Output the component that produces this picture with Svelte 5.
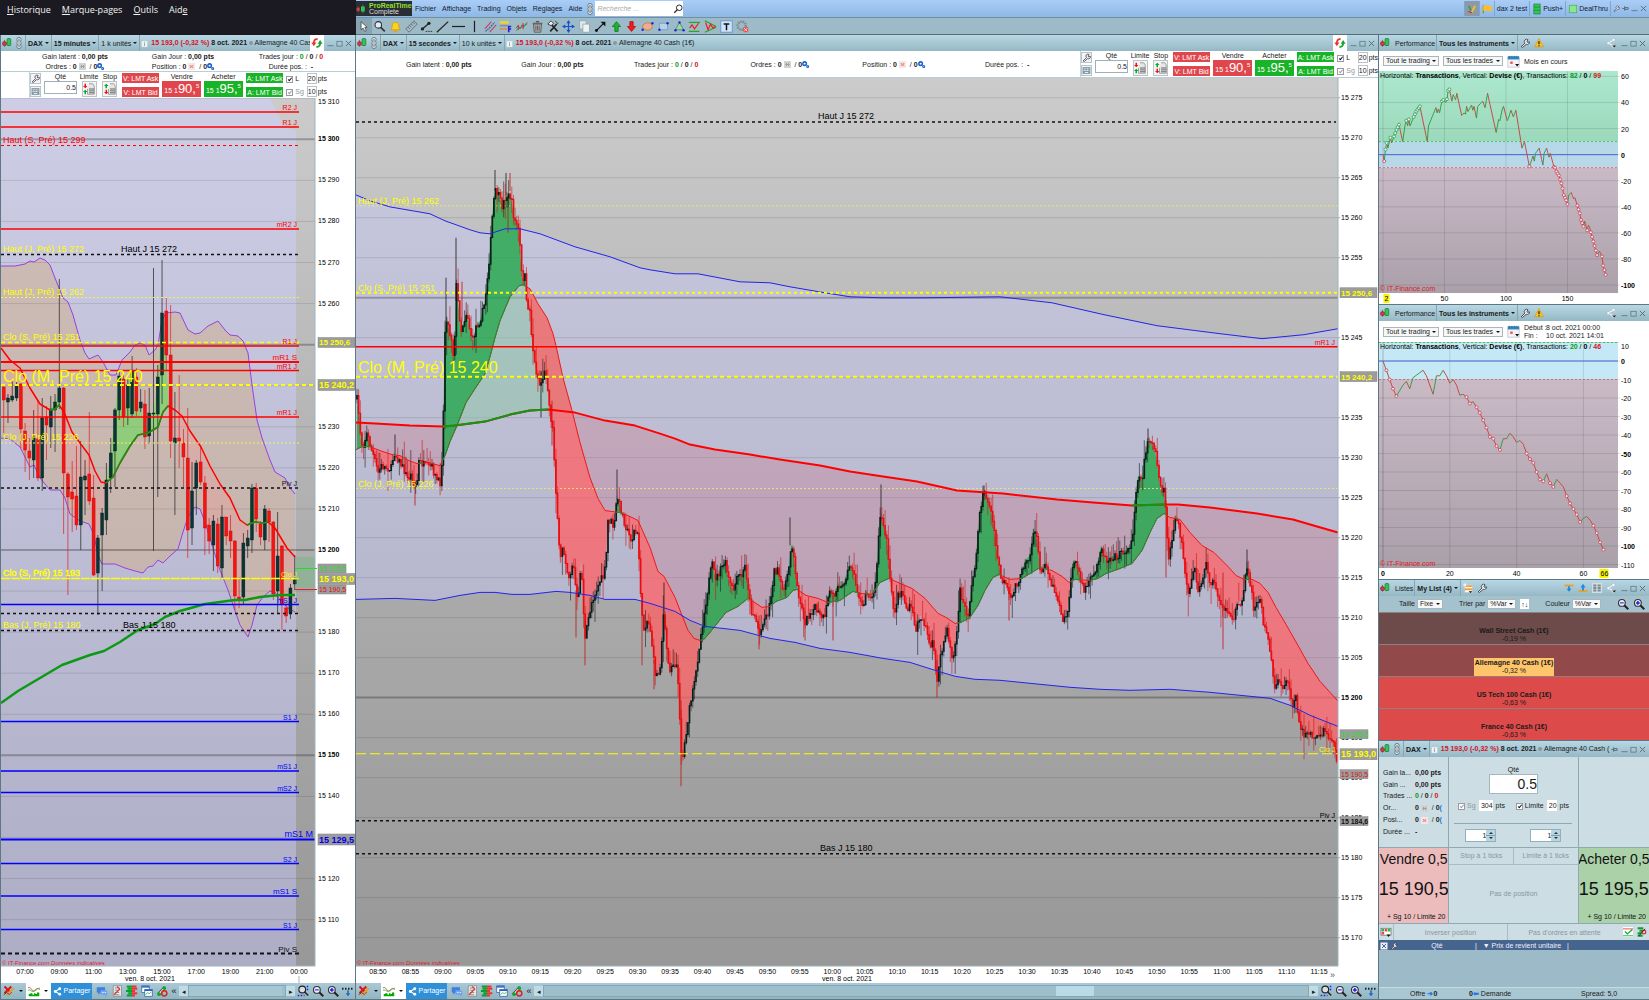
<script lang="ts">
	type Pt = number[];

	let lw = $state(354);
	let lh = $state(885);
	let mw = $state(1022);
	let mh = $state(906);
	let pw = $state(270);
	let ph = $state(234);
	let qh = $state(238);

	const icons: Record<string, string> = {
		candle:
			'<path d="M4 3v11M11 0v13" stroke="#444" stroke-width="1"/><rect x="1" y="6" width="6" height="6" rx="2" fill="#d33b45" stroke="#8c1f28"/><rect x="8" y="1" width="6" height="11" rx="1" fill="#2fc653" stroke="#176f2b"/>',
		chain:
			'<g fill="#dfe9ed" stroke="#56666e" stroke-width="1.200"><rect x="4.500" y="-1" width="7" height="7" rx="3.500"/><rect x="4.500" y="10" width="7" height="7" rx="3.500"/><rect x="4.500" y="4.500" width="7" height="7" rx="3.500"/></g><g fill="#7d9099"><circle cx="8" cy="2.500" r="1.300"/><circle cx="8" cy="8" r="1.300"/><circle cx="8" cy="13.500" r="1.300"/></g>',
		info: '<rect x="1" y="1" width="14" height="14" fill="#eef3f5" stroke="#b5c6cd"/><path d="M8 4v2M8 7v5" stroke="#888" stroke-width="2"/>',
		refresh:
			'<path d="M9 2C4 1 3 5 3 8" fill="none" stroke-width="3" stroke="#e33"/><path d="M7 14c5 1 6-3 6-6" fill="none" stroke="#19a52c" stroke-width="3"/><path d="M-1 7h8l-4 6z" fill="#e33"/><path d="M9 9h8l-4-6z" fill="#19a52c"/>',
		wrench:
			'<path d="M2 14l6-6a3.500 3.500 0 0 1 5-5l-2 2 1 2 3-1a3.500 3.500 0 0 1-5 4l-6 5z" fill="#eef" stroke="#333" stroke-width="1.300"/>',
		warn: '<path d="M8 1l7 13H1z" fill="#ffc21c" stroke="#d99300"/><path d="M8 5v5M8 11.500v1.500" stroke="#222" stroke-width="2"/>',
		share:
			'<path d="M12 3L4 8l8 5" fill="none" stroke="#eef4f6" stroke-width="2"/><g fill="#f4f8fa" stroke="#90a4ad" stroke-width=".6"><circle cx="12" cy="3" r="2.600"/><circle cx="4" cy="8" r="2.600"/><circle cx="12" cy="13" r="2.600"/></g><path d="M10 12h6l-3 3z" fill="#111"/>',
		shareWhite:
			'<path d="M12 3L4 8l8 5" fill="none" stroke="#fff" stroke-width="2"/><g fill="#fff"><circle cx="12" cy="3" r="2.600"/><circle cx="4" cy="8" r="2.600"/><circle cx="12" cy="13" r="2.600"/></g>',
		min: '<path d="M1 13h14" stroke="#5e7782" stroke-width="2"/>',
		max: '<rect x="2" y="3" width="12" height="11" fill="none" stroke="#5e7782" stroke-width="1.800"/>',
		close: '<path d="M2 2l12 12M14 2L2 14" stroke="#4e6772" stroke-width="2"/>',
		pin: '<path d="M1 8h5M6 3v10M6 6h8v4H6" stroke="#4e6772" stroke-width="2" fill="none"/>',
		gears:
			'<circle cx="6" cy="6" r="4" fill="none" stroke="#1b62c9" stroke-width="3.500"/><circle cx="13" cy="12.500" r="2.200" fill="none" stroke="#1b62c9" stroke-width="2.500"/>',
		order: '<rect x="0" y="0" width="16" height="16" fill="#d4d4d4"/><path d="M4 4l8 8M4 12l8-8M3 8h10" stroke="#999" stroke-width="2"/>',
		posx: '<rect x="0" y="0" width="16" height="16" fill="#f7e6e6"/><path d="M4 5l8 6M4 11l8-6" stroke="#eb8a8a" stroke-width="2.500"/>',
		keyboard:
			'<rect x="1" y="2" width="14" height="12" fill="#8198a6"/><path d="M3 5h10M3 8h10" stroke="#fff" stroke-width="1.500" stroke-dasharray="2 1"/><path d="M5 11.500h6" stroke="#fff" stroke-width="1.500"/>',
		limit:
			'<path d="M8 1h5l2 3v11H6V8" fill="#e6e6e6" stroke="#888"/><path d="M8 8h7M8 10.500h7M8 13h7" stroke="#666" stroke-width="1.300"/><path d="M3 1v4" stroke="#e11" stroke-width="2"/><path d="M0 4h6L3 7z" fill="#e11"/><path d="M3 15v-4" stroke="#0a2" stroke-width="2"/><path d="M0 12h6L3 9z" fill="#0a2"/>',
		stop: '<path d="M8 1h5l2 3v11H6V8" fill="#e6e6e6" stroke="#888"/><path d="M8 8h7M8 10.500h7M8 13h7" stroke="#666" stroke-width="1.300"/><path d="M3 7V3" stroke="#0a2" stroke-width="2"/><path d="M0 4h6L3 1z" fill="#0a2"/><path d="M3 9v4" stroke="#e11" stroke-width="2"/><path d="M0 12h6l-3 3z" fill="#e11"/>',
		calendar:
			'<rect x="1" y="3" width="14" height="12" fill="#f4f4f8" stroke="#c2c8d0"/><path d="M1 3.500h14" stroke="#2b87c4" stroke-width="4"/><path d="M3 1v2M6 1v2M9 1v2M12 1v2" stroke="#4a5a66"/><rect x="4" y="8" width="3" height="3" fill="#e55"/><path d="M10 11h5l-2.500 3z" fill="#111"/>',
		cursor: '<path d="M5 2v10l2.500-2 2 4 2-1-2-4h3z" fill="#fff" stroke="#444"/>',
		search: '<circle cx="6.500" cy="6" r="4" fill="#dff0f5" stroke="#333" stroke-width="1.300"/><path d="M9.500 9l5 5" stroke="#333" stroke-width="2"/>',
		searchR: '<circle cx="10" cy="6" r="4.500" fill="#fff" stroke="#222" stroke-width="1.500"/><path d="M7 9l-5 5" stroke="#222" stroke-width="2"/>',
		bell: '<path d="M2 12c2-2 2-4 2-6 1-4 7-4 8 0 0 2 0 4 2 6z" fill="#ffd21e" stroke="#d79a00"/><path d="M6 13h4v2H6z" fill="#e9a400"/><path d="M1 4l2-2M15 4l-2-2" stroke="#f2b600"/>',
		ruler: '<path d="M1 11L11 1l4 4L5 15z" fill="#a9bcc5" stroke="#566"/><path d="M4 9l2 2M6 7l2 2M8 5l2 2M10 3l2 2" stroke="#455"/>',
		trend: '<path d="M3 11L11 4" stroke="#222" stroke-width="1.500"/><circle cx="3" cy="11" r="2" fill="#222"/><circle cx="11" cy="4" r="2" fill="#222"/><path d="M7 14h8" stroke="#222" stroke-dasharray="2 1"/>',
		line: '<path d="M1 15L15 2" stroke="#222" stroke-width="1.500"/>',
		hline: '<path d="M0 8h16" stroke="#222" stroke-width="1.500"/>',
		vline: '<path d="M8 1v14" stroke="#222" stroke-width="1.500"/>',
		channel: '<path d="M1 11L9 2M7 15l8-9" stroke="#d03a6a" stroke-width="1.300"/><path d="M2 14L13 3" stroke="#25c" stroke-width="1.300" stroke-dasharray="2 1"/><path d="M5 13l7-8" stroke="#4a9a4a" stroke-width=".8"/>',
		bars: '<path d="M1 3h11" stroke="#f2d52c" stroke-width="3"/><path d="M1 7h10" stroke="#88949a" stroke-width="2"/><path d="M1 11h9" stroke="#e08a50" stroke-width="2"/><path d="M12 15V8h3M12 11h3" stroke="#22c" stroke-width="2" fill="none"/>',
		zigzag: '<path d="M1 10l3-3 2 4 3-5 2 2 4-5" fill="none" stroke="#333" stroke-width=".8"/><path d="M1 13l14-8" stroke="#393"/><path d="M4 6v6M10 4v7" stroke="#c33" stroke-width="1.500"/>',
		trash: '<path d="M3 5h10l-1 10H4z" fill="#a8a8a8" stroke="#555"/><path d="M2 4h12M6 2h4" stroke="#555" stroke-width="1.500"/><path d="M6 7v6M8 7v6M10 7v6" stroke="#444" stroke-width=".8"/>',
		tools: '<path d="M4 14L12 5M4 4l9 10" stroke="#222" stroke-width="2"/><path d="M1 5l4-4 3 3-3 3zM10 1l4 4" stroke="#222" fill="#eee"/>',
		move: '<path d="M8 2v12M2 8h12" stroke="#1652c8" stroke-width="1.500"/><path d="M5.500 4L8 0l2.500 4zM5.500 12L8 16l2.500-4zM4 5.500L0 8l4 2.500zM12 5.500L16 8l-4 2.500z" fill="#1652c8"/>',
		copy: '<rect x="2" y="1" width="8" height="10" fill="#dfe8ec" stroke="#93a5ad"/><rect x="6" y="5" width="8" height="10" fill="#eef3f5" stroke="#93a5ad"/>',
		arrow: '<path d="M3 13L13 3" stroke="#111" stroke-width="1.500"/><path d="M8 2h6v6z" fill="#111"/><circle cx="3" cy="13" r="1.800" fill="#111"/>',
		up: '<path d="M8 2l5 6h-3v6H6V8H3z" fill="#1db32c" stroke="#0c7a19"/>',
		down: '<path d="M8 14l5-6h-3V2H6v6H3z" fill="#f31b1b" stroke="#b50d0d"/>',
		ellipse: '<ellipse cx="8" cy="8" rx="6" ry="4.500" fill="#e9b08f" stroke="#d0703a"/><circle cx="14" cy="4" r="1.500" fill="#22d"/><circle cx="2" cy="12" r="1.500" fill="#22d"/>',
		rect: '<rect x="3" y="4" width="10" height="8" fill="#b6d2e4" stroke="#6c9fd6"/><circle cx="13" cy="4" r="1.500" fill="#22d"/><circle cx="3" cy="12" r="1.500" fill="#22d"/>',
		triangle: '<path d="M8 3l5 9H3z" fill="#a9d0b8" stroke="#2b9a4a"/><circle cx="8" cy="3" r="1.500" fill="#22d"/><circle cx="13" cy="12.500" r="1.500" fill="#22d"/><circle cx="3" cy="12.500" r="1.500" fill="#22d"/>',
		wave: '<path d="M1 3h14" stroke="#2a2" stroke-width="1.500"/><path d="M1 14h13" stroke="#2a2" stroke-width="1.500"/><path d="M2 10l3-4 3 5 5-7" fill="none" stroke="#e22" stroke-width="1.500"/>',
		pennant: '<path d="M1 1l14 7M1 15l14-6" stroke="#2a2" stroke-width="1.500"/><path d="M2 3l3 9 3-7 3 5 3-2" fill="none" stroke="#e22" stroke-width="1.500"/>',
		text: '<rect x="1" y="1" width="14" height="14" fill="#cfe4f8" stroke="#5b8fd0"/><path d="M4.500 5h7M8 4.500v8" stroke="#111" stroke-width="1.800"/>',
		dial: '<circle cx="7" cy="7" r="5" fill="none" stroke="#7d8b91" stroke-width="3" stroke-dasharray="2 1"/><rect x="9" y="9" width="6" height="6" fill="#e44"/><path d="M10 10l4 4M14 10l-4 4" stroke="#fff"/>',
		pencils: '<rect width="16" height="16" fill="#8b9aa8"/><path d="M3 3l5 11" stroke="#2a9a3a" stroke-width="2"/><path d="M7 14l6-11" stroke="#f2c030" stroke-width="3"/><path d="M2 12l6 2" stroke="#d22" stroke-width="2"/>',
		flag: '<path d="M2 2v13" stroke="#a87100" stroke-width="1.500"/><path d="M2 3c4-2 8 1 13 0v8c-5 2-9-2-13 0z" fill="#ffbf1d"/>',
		drawtools: '<path d="M2 2l9 9M11 2L2 11" stroke="#d11" stroke-width="2.500"/><path d="M5 14l9-10" stroke="#e0a030" stroke-width="3"/><path d="M1 13l4-3 4 3" fill="none" stroke="#333"/>',
		chart: '<rect width="16" height="16" fill="#fff"/><path d="M0 4c4-4 5 7 9 3s4-2 7-1" fill="none" stroke="#c33"/><path d="M0 7c4-2 5 4 9 1s4-3 7-4" fill="none" stroke="#2a2"/><path d="M1 15v-3h2v-1h3v2h2v-2h2v1h2v-2h3v5z" fill="#0a0"/>',
		chat: '<path d="M1 3h11v7H6l-3 3v-3H1z" fill="#3f7fe0"/><path d="M6 7h9v6h-1v3l-3-3H6z" fill="#6ea4f2"/><path d="M8 10h5" stroke="#fff" stroke-dasharray="1 1" stroke-width="1.500"/>',
		news: '<path d="M3 1h11v14H3z" fill="#e9e9e9" stroke="#888"/><path d="M5 4h5M5 7h6M5 10h6M5 13h6" stroke="#777"/><path d="M4 13l8-8M8 2l4 3" stroke="#d33" stroke-width="1.500"/>',
		book: '<path d="M1 2h7M2 5h6M0 8h8M3 11h5M1 14h7" stroke="#0aa02a" stroke-width="2.500"/><path d="M8 2h6M8 5h7M8 8h4M8 11h7M8 14h4" stroke="#e33" stroke-width="2.500"/>',
		windows: '<rect x="1" y="1" width="10" height="9" fill="#fff" stroke="#2a62b8"/><path d="M1 2.500h10" stroke="#2a62b8" stroke-width="2"/><rect x="5" y="6" width="10" height="9" fill="#fff" stroke="#2a62b8"/><path d="M5 7h10" stroke="#2a62b8" stroke-width="2"/><path d="M6 13l3-3 2 2 3-3" fill="none" stroke="#2a2"/>',
		auto: '<path d="M3 13l9-10" stroke="#333" stroke-width="4"/><path d="M3 13l9-10" stroke="#eee" stroke-width="2"/><circle cx="11" cy="11" r="3.500" fill="none" stroke="#d22" stroke-width="2"/><circle cx="4" cy="12" r="2.500" fill="#1a2"/><circle cx="11" cy="4" r="2.500" fill="#1a2"/>',
		zoomFit: '<circle cx="7" cy="6" r="4.500" fill="#ddd" stroke="#222" stroke-width="1.500"/><path d="M10 9l5 5" stroke="#222" stroke-width="2"/><path d="M1 14h9M14 1v8" stroke="#12e" stroke-dasharray="2 2" stroke-width="2"/>',
		zoomOut: '<circle cx="6.500" cy="6.500" r="4.500" fill="#eef" stroke="#333" stroke-width="1.500"/><path d="M10 10l5 5" stroke="#222" stroke-width="2.500"/><path d="M4 6.500h5" stroke="#22d" stroke-width="1.500"/>',
		zoomIn: '<circle cx="6.500" cy="6.500" r="4.500" fill="#eef" stroke="#333" stroke-width="1.500"/><path d="M10 10l5 5" stroke="#222" stroke-width="2.500"/><path d="M4 6.500h5M6.500 4v5" stroke="#22d" stroke-width="2"/>',
		dots: '<path d="M0 5h16" stroke="#222" stroke-width="2.500" stroke-dasharray="2 2"/><path d="M8 7v4" stroke="#16c" stroke-width="2"/><path d="M5 11h6l-3 4z" fill="#16c"/>',
		listAdd: '<rect x="3" y="3" width="12" height="12" fill="#fff" stroke="#bcc"/><path d="M3 5h12M3 10h12" stroke="#f0a040" stroke-width="3"/><circle cx="3" cy="3" r="2.500" fill="#eef"/><path d="M9 13h6l-3 3z" fill="#111"/>',
		sortDown: '<path d="M1 4h14" stroke="#f0a020" stroke-width="3"/><path d="M8 5v5" stroke="#28d" stroke-width="3"/><path d="M4 9h8l-4 5z" fill="#28d"/>',
		sortUp: '<path d="M1 13h14" stroke="#f0a020" stroke-width="3"/><path d="M8 6v6" stroke="#28d" stroke-width="3"/><path d="M4 7h8L8 1z" fill="#28d"/>',
		cards: '<rect width="16" height="16" fill="#d5dde1"/><path d="M2 4h5M2 8h5M2 12h5M9 4h5M9 8h5M9 12h5" stroke="#7c8b92" stroke-width="3"/>',
		grid: '<rect x="0" y="2" width="16" height="11" fill="#fff" stroke="#555"/><path d="M1 3h4v4H1zM11 3h4v4h-4z" fill="#2b4"/><path d="M6 3h4v4H6zM1 8h4v4H1z" fill="#e44"/><path d="M9 12h6l-3 4z" fill="#111"/>',
		check: '<rect width="16" height="16" fill="#fff"/><path d="M0 3h16" stroke="#e44" stroke-width="1.500"/><path d="M0 14h16" stroke="#2b4" stroke-width="1.500"/><path d="M3 7l4 4 8-7" fill="none" stroke="#1a3" stroke-width="2"/>',
		book2: '<path d="M1 2h9M4 6h6M1 10h6M1 14h8" stroke="#0aa02a" stroke-width="3"/><circle cx="11" cy="8" r="3" fill="none" stroke="#d33" stroke-width="2"/><path d="M3 14L13 3" stroke="#222" stroke-width="1.500"/>',
		expand: '<rect x="1" y="1" width="14" height="14" fill="#eef"/><path d="M4 4l8 8M12 4l-8 8" stroke="#46658e" stroke-width="2"/>',
		logo: '<path d="M11 1v14M3.500 4v9" stroke="#888"/><rect x="1" y="6" width="5" height="5" fill="#d93b3b"/><rect x="8" y="4" width="6" height="8" fill="#2fc653"/>',
		battery: '<rect x="3" y="0" width="10" height="16" fill="#2fc653" stroke="#1c7c34"/><path d="M3 5h10M3 10h10" stroke="#1c7c34"/>',
		lamp: '<rect x="2" y="2" width="12" height="12" fill="#86ea8c" stroke="#4aa555"/>'
	};

	const drawTools = [
		'cursor', 'search', 'bell', 'ruler', 'trend', 'line', 'hline', 'vline', 'channel', 'bars', 'zigzag', 'trash', 'tools',
		'move', 'copy', 'arrow', 'up', 'down', 'ellipse', 'rect', 'triangle', 'wave', 'pennant', 'text', 'dial'
	];

	// "x,y x,y ..." -> [[x, y], ...]
	function parse(s: string): Pt[] {
		return s.trim().split(/\s+/).map((p) => p.split(',').map(Number));
	}

	function at(pts: Pt[], x: number) {
		if (x <= pts[0][0]) return pts[0][1];
		for (let i = 1; i < pts.length; i++) {
			if (x <= pts[i][0]) {
				const [x0, y0] = pts[i - 1];
				const [x1, y1] = pts[i];
				return y0 + ((y1 - y0) * (x - x0)) / (x1 - x0);
			}
		}
		return pts[pts.length - 1][1];
	}

	function scaler(kx: number, ky: number, ox: number, oy: number) {
		const x = (v: number) => (v - ox) * kx;
		const y = (v: number) => (v - oy) * ky;
		const path = (pts: Pt[]) => pts.map((p, i) => (i ? 'L' : 'M') + x(p[0]).toFixed(1) + ' ' + y(p[1]).toFixed(1)).join('');
		return { x, y, path };
	}

	let L = $derived(scaler(lw / 354, lh / 885, 1, 98));
	let M = $derived(scaler(mw / 1022, mh / 906, 356, 77));

	// area between two curves, split where they cross: [a above b, a below b]
	function between(a: Pt[], b: Pt[], from: number, to: number, step: number) {
		const out: Pt[][][] = [[], []];
		let run: Pt[] = [];
		let side = -1;
		const flush = () => {
			if (run.length > 1) {
				const top = run.map((p) => [p[0], p[1]]);
				const bottom = run.map((p) => [p[0], p[2]]).reverse();
				out[side].push([...top, ...bottom]);
			}
		};
		for (let x = from; x <= to; x += step) {
			const ya = at(a, x);
			const yb = at(b, x);
			const s = ya < yb ? 0 : 1;
			if (s !== side) {
				run.push([x, ya, yb]);
				flush();
				run = [];
				side = s;
			}
			run.push([x, ya, yb]);
		}
		flush();
		return out;
	}

	// ---- 15 minutes
	const lUpper = parse(
		'1,266 15,266 25,264 30,261 34,262 40,258 45,260 50,265 55,278 63,298 68,302 73,315 80,340 85,353 89,359 98,355 103,362 110,375 116,375 122,360 130,352 135,345 140,343 145,345 149,355 155,350 158,345 162,320 166,313 175,312 180,313 188,330 195,334 200,333 208,326 218,321 225,330 230,335 238,336 243,341 248,353 252,385 257,420 262,438 270,460 275,472 285,478 290,488 295,494'
	);
	const lLower = parse(
		'1,438 10,439 20,447 30,467 34,465 40,478 50,490 60,490 65,498 70,514 80,521 89,524 94,535 98,555 102,564 115,564 125,568 135,571 143,573 148,567 153,566 158,560 163,563 170,556 178,549 183,532 188,517 195,507 200,509 205,522 212,545 220,570 228,590 233,605 240,625 248,637 252,625 257,605 263,597 270,591 275,592 280,600 288,608 295,612'
	);
	const lFast = parse(
		'1,348 10,360 20,368 30,388 40,404 50,410 55,409 59,405 64,412 72,432 80,443 89,455 95,471 101,482 106,483 113,477 120,463 130,446 138,435 148,433 158,427 163,412 168,406 175,410 182,416 190,431 201,447 210,466 220,484 230,498 240,520 247,525 255,522 263,523 268,522 275,528 281,538 287,548 295,557'
	);
	const lSlow = parse(
		'1,703 18,691 40,678 62,665 90,655 104,651 120,642 138,630 155,624 165,617 180,611 205,604 235,600 245,600 260,597 280,595 295,595'
	);
	// body top, body bottom, high, low, 1 = up
	const lCandles = [
		[387, 400, 385, 433, 0], [398, 402, 394, 423, 1], [396, 400, 381, 402, 1], [386, 398, 380, 401, 1], [384, 429, 383, 448, 0],
		[431, 450, 423, 472, 0], [451, 458, 438, 480, 0], [437, 460, 410, 478, 1], [439, 478, 400, 481, 0], [418, 478, 398, 491, 1],
		[417, 425, 406, 460, 0], [409, 427, 396, 448, 1], [402, 410, 394, 452, 1], [388, 402, 279, 409, 1], [388, 473, 387, 534, 0],
		[474, 497, 472, 595, 0], [492, 499, 461, 532, 0], [496, 525, 446, 530, 0], [477, 525, 441, 550, 1], [476, 480, 460, 515, 1],
		[474, 501, 412, 505, 0], [498, 575, 475, 576, 0], [538, 573, 535, 615, 1], [513, 535, 508, 591, 1], [480, 520, 463, 535, 1],
		[453, 478, 438, 493, 1], [410, 451, 408, 487, 1], [376, 410, 372, 420, 1], [379, 417, 375, 427, 0], [385, 408, 378, 425, 1],
		[371, 414, 356, 418, 1], [377, 411, 368, 416, 0], [402, 408, 389, 412, 1], [404, 437, 390, 449, 0], [413, 436, 388, 444, 1],
		[413, 414, 268, 551, 1], [377, 414, 365, 497, 1], [313, 375, 260, 404, 1], [311, 355, 297, 370, 0], [355, 441, 305, 458, 0],
		[438, 443, 392, 515, 1], [438, 441, 375, 468, 0], [443, 457, 429, 487, 0], [458, 530, 408, 558, 0], [491, 528, 462, 545, 1],
		[463, 488, 460, 515, 1], [462, 482, 445, 485, 0], [483, 528, 476, 555, 0], [525, 541, 518, 554, 0], [521, 545, 515, 571, 1],
		[524, 566, 518, 573, 0], [517, 568, 505, 579, 1], [517, 536, 517, 545, 0], [531, 541, 515, 558, 0], [541, 596, 540, 610, 0],
		[597, 599, 577, 608, 0], [543, 597, 533, 605, 1], [538, 546, 530, 558, 1], [488, 540, 484, 553, 1], [488, 519, 483, 532, 0],
		[524, 537, 521, 545, 0], [509, 540, 505, 550, 1], [511, 522, 508, 542, 0], [522, 594, 521, 600, 0], [556, 591, 512, 613, 1],
		[546, 604, 545, 630, 0], [608, 616, 604, 623, 0], [588, 613, 584, 619, 1], [580, 584, 555, 590, 1]
	];
	const lx = (i: number) => 3.7 + i * 4.28;
	const lClose = lCandles.map((c, i) => [lx(i), c[4] ? c[0] : c[1]]);
	const lAreas = between(lClose, lFast, 3, 295, 1);

	const lGrid = Array.from({ length: 21 }, (_, i) => {
		const p = 310 - i * 10;
		return { label: '15 ' + p, y: 139.3 + (300 - p) * 4.107, bold: p % 50 === 0, hide: [250, 240, 190, 130].includes(p) };
	});
	// y, colour, width, dash, label, label size
	const lLines: [number, string, number, string, string, number][] = [
		[112, 'red', 1.5, '', 'R2 J', 7],
		[127, 'red', 1.5, '', 'R1 J', 7],
		[145.5, 'red', 1, '3 3', '', 7],
		[229, 'red', 1.5, '', 'mR2 J', 7],
		[254.5, '#111', 1.5, '3 3', '', 7],
		[297.5, '#f2f260', 1, '2 2', '', 7],
		[342.5, 'yellow', 1.5, '4 3', '', 7],
		[346, 'red', 1.5, '', 'R1 J', 7],
		[362, 'red', 2, '', 'mR1 S', 8],
		[370.5, 'red', 1.5, '', 'mR1 J', 7],
		[417, 'red', 1.5, '', 'mR1 J', 7],
		[443, '#f2f260', 1, '2 2', '', 7],
		[488, '#111', 1.5, '3 3', 'Piv J', 7],
		[604.5, 'blue', 1.5, '', 'mS1 J', 7],
		[613.5, '#111', 1.5, '3 3', '', 7],
		[630.5, '#111', 1.5, '3 3', '', 7],
		[721.5, 'blue', 1.5, '', 'S1 J', 7],
		[771, 'blue', 1.5, '', 'mS1 J', 7],
		[792.5, 'blue', 1.5, '', 'mS2 J', 7],
		[863.5, 'blue', 1.5, '', 'S2 J', 7],
		[896, 'blue', 1.5, '', 'mS1 S', 8],
		[929.5, 'blue', 1.5, '', 'S1 J', 7],
		[953.5, '#111', 2, '4 3', 'Piv S', 8]
	];
	const lTimes = ['07:00', '09:00', '11:00', '13:00', '15:00', '17:00', '19:00', '21:00', '00:00'];

	// ---- 15 secondes
	const mPrice = parse(
		`357,398 359,415 361,440 363,445 367,432 371,447 375,460 378,472 381,465 391,468 394,452 398,458 403,467 408,478 411,474 414,485 417,483 419,460 424,464 432,466 436,478 440,482 441,480 443,430 445,330 447,315 449,330 452,338 453,355 455,330 456,280 458,300 461,330 464,320 467,310 470,330 473,340 476,325 480,320 484,305 486,290 489,260 491,235 493,205 495,190 498,192 502,205 506,195 511,195 514,218 518,225 520,245 522,278 525,275 526,300 530,310 532,340 535,365 540,385 545,370 547,378 550,412 553,430 555,475 558,525 560,565 562,545 565,555 568,575 570,575 573,560 576,590 578,605 581,560 584,620 585,640 588,620 592,600 596,590 600,580 604,575 606,560 608,520 611,520 614,528 617,495 620,505 624,520 628,532 632,540 634,530 638,535 640,580 643,630 647,620 650,625 655,672 658,675 661,660 663,610 666,640 669,670 673,662 677,665 680,720 682,765 683,755 685,740 690,705 695,680 700,640 706,600 709,580 712,563 716,578 721,568 725,561 729,580 733,590 738,575 742,575 745,565 748,585 751,610 755,615 760,635 763,620 768,612 771,595 774,570 778,570 782,590 788,575 791,545 793,545 796,580 800,600 805,622 810,612 815,607 820,615 825,618 828,595 830,590 834,595 838,582 842,588 846,575 850,565
		852,565 856,585 863,610 866,590 872,598 876,575 879,530 881,510 883,525 887,540 890,580 894,613 898,595 902,590 907,610 911,605 916,630 920,615 926,625 930,650 933,640 937,680 940,660 944,640 947,630 950,645 953,660 957,630 960,590 964,605 968,615 971,590 975,565 979,520 983,490 987,497 992,515 996,545 1001,578 1006,585 1011,600 1015,585 1020,578 1025,560 1030,555 1034,527 1037,540 1041,575 1046,560 1050,580 1055,590 1060,605 1063,620 1067,613 1070,590 1073,560 1077,565 1080,575 1084,590 1090,580 1096,570 1101,545 1106,560 1112,556 1118,555 1125,550 1130,548 1133,530 1136,490 1138,475 1142,480 1145,455 1148,437 1152,442 1156,455 1158,470 1161,490 1164,490 1166,510 1168,560 1171,545 1174,530 1176,515 1178,520 1182,545 1185,575 1188,595 1191,585 1194,565 1198,590 1202,580 1206,562 1209,580 1214,582 1219,598 1223,605 1228,615 1233,620 1238,600 1242,602 1247,565 1250,580 1254,610 1258,600 1261,600 1263,620 1268,635 1272,665 1275,688 1279,678 1282,688 1286,680 1290,690 1293,705 1296,698 1298,720 1304,733 1310,735 1315,735 1320,737 1324,730 1328,735 1334,745 1337,760`
	);
	const mFast = parse(
		`356,449 362,446 370,446 380,450 392,454 400,455 409,460 417,463 428,462 440,465 445,455 450,441 457,425 466,402 475,388 485,373 490,356 495,337 500,320 510,296 519,285 523,284 530,288 538,303 547,317 553,333 556,345 563,377 572,410 580,442 590,477 598,498 605,510 612,511 620,512 630,516 638,520 650,547 658,571 664,576 675,597 682,615 688,630 694,638 700,640 704,639 710,632 718,622 726,612 738,606 748,598 756,603 762,607 770,606 776,601 787,597 793,590 797,589 806,595 818,598 828,602 840,600 850,593 853,591 860,593 872,594 880,582 889,578 900,583 912,588 925,598 938,613 946,617 955,623 961,622 970,617 978,605 985,590 993,577 999,574 1010,579 1022,578 1030,573 1040,567 1052,570 1062,576 1069,582 1075,579 1090,580 1098,578 1106,573 1120,568 1132,563 1142,550 1150,532 1157,518 1164,513 1170,517 1176,518 1180,519 1190,532 1202,545 1214,552 1228,566 1236,575 1244,579 1252,579 1260,583 1268,592 1276,607 1286,624 1298,645 1308,663 1320,681 1330,692 1338,701`
	);
	const mSlow = parse(
		'356,422 375,423 410,425 443,426 455,425 485,421 510,414 530,410 548,409 575,412 605,420 635,425 660,433 675,438 690,444 715,449 750,454 780,459 820,465 850,471 883,476 917,481 957,490 1003,493 1057,499 1093,502 1132,505 1165,504 1178,504 1210,507 1257,513 1293,519 1317,526 1338,532'
	);
	const mUpper = parse(
		'356,194 370,200 390,206 430,213 445,220 470,229 480,232 490,233 505,228 520,228 540,233 575,246 610,256 640,267 650,269 675,273 698,273 740,281 770,282 790,286 825,292 850,296 883,297 925,297 1000,296 1052,302 1104,314 1157,325 1220,333 1262,338 1304,334 1338,328'
	);
	const mLower = parse(
		'356,599 395,598 435,600 460,595 480,592 495,592 512,594 530,594 556,591 570,592 590,595 605,599 635,599 650,603 675,611 690,620 705,626 740,630 770,638 795,642 820,648 850,652 883,658 910,662 935,670 955,676 975,679 1000,680 1040,684 1070,687 1100,689 1130,690 1170,689 1210,692 1270,698 1290,705 1310,715 1330,723 1338,726'
	);
	// isolated long wicks: x, high, low
	const spikes = [
		[456, 237, 300], [446, 277, 330], [462, 281, 320], [495, 169, 190], [506, 172, 195], [510, 172, 190], [508, 195, 232], [552, 400, 445],
		[541, 370, 417], [585, 620, 665], [642, 600, 665], [654, 660, 689], [664, 582, 640], [681, 700, 786], [759, 615, 649],
		[805, 610, 640], [833, 590, 640], [881, 484, 520], [937, 660, 697], [617, 469, 500], [1166, 500, 577], [1223, 572, 649],
		[1148, 428, 440], [1247, 549, 570], [984, 485, 500], [576, 590, 637], [415, 480, 505], [395, 434, 455], [1009, 590, 620], [790, 517, 545]
	];

	let seed = 7;
	function rnd() {
		seed = (seed * 16807) % 2147483647;
		return seed / 2147483647;
	}
	const mBars: Pt[] = [];
	let prev = 398;
	for (let x = 357; x < 1338; x += 1.63) {
		const c = at(mPrice, x) + (rnd() - 0.5) * 7;
		const top = Math.min(prev, c);
		const bottom = Math.max(prev, c) + 1;
		mBars.push([x, top, bottom, top - rnd() * rnd() * 24, bottom + rnd() * rnd() * 24, c < prev ? 1 : 0]);
		prev = c;
	}
	const mBetween = between(mPrice, mFast, 357, 1338, 1);
	const mTrend = between(mFast, mSlow, 356, 1338, 1);

	let barPaths = $derived.by(() => {
		const d = ['', '', '', ''];
		for (const [x, t, b, h, l, up] of mBars) {
			d[up] += `M${M.x(x).toFixed(1)} ${M.y(t).toFixed(1)}V${M.y(b).toFixed(1)}`;
			d[up + 2] += `M${M.x(x).toFixed(1)} ${M.y(h).toFixed(1)}V${M.y(l).toFixed(1)}`;
		}
		return d;
	});

	const mGrid = Array.from({ length: 22 }, (_, i) => {
		const p = 275 - i * 5;
		return { label: '15 ' + p, y: 96.7 + (275 - p) * 8.008, bold: p % 50 === 0, hide: [250, 240].includes(p) };
	});
	const mTimes = Array.from({ length: 30 }, (_, i) => {
		const m = 530 + i * 5;
		return { label: String(Math.floor(m / 60)).padStart(2, '0') + ':' + String(m % 60).padStart(2, '0'), x: 378 + i * 32.45 };
	});

	// part of a curve between two x
	function slice(pts: Pt[], a: number, b: number) {
		return [[a, at(pts, a)], ...pts.filter((p) => p[0] > a && p[0] < b), [b, at(pts, b)]];
	}

	// ---- performance
	const perfMonth = parse(
		'0,0 1,-5 2,4 3,9 4,5 6,13 7,9 9,14 11,19 13,23 16,10 18,23 19,26 20,22 21,27 22,22 25,29 27,33 30,37 36,10 37,22 43,36 44,32 45,35 46,32 47,37 48,41 49,42 51,40 52,42.5 53,49 54,50 56,41 57,46 59,42 60,47 64,30 66,32 67,31 68,37 69,33 72,38 73,34 74,37 76,28 77,37 81,41 83,36 85,47 92,17 94,27 95,26 97,35 98,37 101,26 102,28 104,34 106,29 108,34 113,5 115,10 119,-9 122,-1 123,-5 124,1 127,5 130,-8 131,1 133,5 135,-2 136,1 139,-9.500 140,-10 141,-13 143,-16 145,-22 146,-26 147,-31 149,-35 150,-38 151,-31 153,-29 155,-34 156,-33 158,-39 160,-45 161,-50 163,-55 164,-51 166,-58 167,-54 168,-56 170,-63 172,-70 174,-77 176,-74 178,-78 179,-85 181,-92'
	);
	const perfWeek = parse(
		'0,0 1,-5 2,-10 3,-15 4,-19 6,-13 7,-11 8,-15 9,-9 12,-5 13,-8 15,-18 16,-8 17,-8 18,-5 19,-8 20,-12 21,-10 22,-13 23,-18.500 24,-18 25,-19.500 26,-23 27,-22 28,-25 29,-28 30,-32 31,-36 32,-41 33,-42 34,-46 35,-48 36,-42 37,-42 38,-39 39,-41 40,-44 41,-43 42,-45 43,-50 44,-53 45,-55 46,-60 47,-64 48,-65 49,-61 50,-66 51,-68 52,-64 53,-66 54,-68 55,-73 56,-77 57,-80 58,-83 59,-87 60,-85 61,-84 62,-86 63,-89 64,-93 65,-98 66,-102'
	);

	function perfSteps(pts: Pt[]) {
		const n = pts[pts.length - 1][0];
		let hi = 0;
		let lo = 0;
		const out = [];
		for (let i = 1; i <= n; i++) {
			const a = at(pts, i - 1);
			const b = at(pts, i);
			out.push({ i, a, b, up: b > a, mark: b > hi || b < lo });
			hi = Math.max(hi, b);
			lo = Math.min(lo, b);
		}
		return out;
	}

	type Perf = {
		steps: ReturnType<typeof perfSteps>;
		zero: number;
		unit: number;
		step: number;
		plot: number;
		height: number;
		ticks: number[];
		bold: number[];
		xs: number[];
		now: number;
		wins: number;
		losses: number;
	};
	const month: Perf = {
		steps: perfSteps(perfMonth), zero: 84, unit: 1.31, step: 1.23, plot: 223, height: 234,
		ticks: [60, 40, 20, 0, -20, -40, -60, -80, -100], bold: [0, -100], xs: [50, 100, 150], now: 2, wins: 82, losses: 99
	};
	const week: Perf = {
		steps: perfSteps(perfWeek), zero: 19, unit: 1.85, step: 3.34, plot: 226, height: 237,
		ticks: [10, 0, -10, -20, -30, -40, -50, -60, -70, -80, -90, -100, -110], bold: [0, -50, -100], xs: [0, 20, 40, 60], now: 66, wins: 20, losses: 46
	};

	const instruments = [
		{ name: 'Wall Street Cash (1€)', change: '-0,19 %', tone: 'dim' },
		{ name: 'Allemagne 40 Cash (1€)', change: '-0,32 %', tone: 'soft', active: true },
		{ name: 'US Tech 100 Cash (1€)', change: '-0,63 %', tone: 'hot' },
		{ name: 'France 40 Cash (1€)', change: '-0,63 %', tone: 'hot' }
	];
</script>

{#snippet icon(name: string)}
	<svg class="icon" viewBox="0 0 16 16" aria-hidden="true">{@html icons[name]}</svg>
{/snippet}

{#snippet winButtons()}
	<span class="win">
		<button aria-label="Réduire">{@render icon('min')}</button>
		<button aria-label="Agrandir">{@render icon('max')}</button>
		<button aria-label="Fermer">{@render icon('close')}</button>
	</span>
{/snippet}

{#snippet quote(name: string)}
	<span class="quote">
		{@render icon('info')}
		<b class="neg">15 193,0 (-0,32 %)</b> <b>8 oct. 2021</b> <i class="bullet"></i> {name}
	</span>
{/snippet}

{#snippet chartHead(period: string, units: string, name: string)}
	<header class="head">
		<span class="cell lead">{@render icon('candle')}</span>
		<span class="cell link">{@render icon('chain')}</span>
		<button class="cell menu bold">DAX</button>
		<button class="cell menu bold">{period}</button>
		<button class="cell menu">{units}</button>
		{@render quote(name)}
		<button class="refresh" aria-label="Actualiser">{@render icon('refresh')}</button>
		{@render winButtons()}
	</header>
{/snippet}

{#snippet stats()}
	<span>Gain latent : <b>0,00 pts</b></span>
	<span>Gain Jour : <b>0,00 pts</b></span>
	<span>Trades jour : <b class="gain">0</b> / <b>0</b> / <b class="neg">0</b></span>
	<span>Ordres : <b>0</b> {@render icon('order')} &nbsp;/ <b>0</b>{@render icon('gears')}</span>
	<span>Position : <b>0</b> {@render icon('posx')} &nbsp;/ <b>0</b>{@render icon('gears')}</span>
	<span>Durée pos. : &nbsp;<b>-</b></span>
{/snippet}

{#snippet ticket(id: string)}
	<div class="ticket">
		<div class="stack mini">
			<button class="tool" aria-label="Réglages">{@render icon('wrench')}</button>
			<button class="tool" aria-label="Clavier">{@render icon('keyboard')}</button>
		</div>
		<div class="stack qty">
			<label for="{id}-qty">Qté</label>
			<input id="{id}-qty" value="0.5" />
		</div>
		<div class="stack order">
			<span>Limite</span>
			<button aria-label="Limite">{@render icon('limit')}</button>
		</div>
		<div class="stack order">
			<span>Stop</span>
			<button aria-label="Stop">{@render icon('stop')}</button>
		</div>
		<div class="stack lmt sell">
			<button>V: LMT Ask</button>
			<button>V: LMT Bid</button>
		</div>
		<div class="stack deal sell">
			<span>Vendre</span>
			<button><small>15 1</small>90,<sup>5</sup></button>
		</div>
		<div class="stack deal buy">
			<span>Acheter</span>
			<button><small>15 1</small>95,<sup>5</sup></button>
		</div>
		<div class="stack lmt buy">
			<button>A: LMT Ask</button>
			<button>A: LMT Bid</button>
		</div>
		<div class="stack guard">
			<div><label><input type="checkbox" checked /> L</label><input class="pts" aria-label="Limite" value="20" />pts</div>
			<div><label class="off"><input type="checkbox" checked disabled /> Sg</label><input class="pts" aria-label="Stop garanti" value="10" />pts</div>
		</div>
	</div>
{/snippet}

{#snippet foot()}
	<footer class="foot">
		<button class="ft" aria-label="Outils">{@render icon('drawtools')}</button>
		<button class="drop" aria-label="Dessins"></button>
		<button class="ft white" aria-label="Graphique">{@render icon('chart')}</button>
		<button class="drop white" aria-label="Style"></button>
		<button class="partager">{@render icon('shareWhite')} Partager</button>
		<button class="ft" aria-label="Messages">{@render icon('chat')}</button>
		<button class="ft" aria-label="Nouvelles">{@render icon('news')}</button>
		<button class="ft" aria-label="Carnet">{@render icon('book')}</button>
		<button class="ft" aria-label="Fenêtres">{@render icon('windows')}</button>
		<button class="ft" aria-label="Automatique">{@render icon('auto')}</button>
		<span class="chev">«</span>
		<button class="arr">◂</button>
		<div class="track"><i></i></div>
		<button class="arr">▸</button>
		<button class="ft" aria-label="Ajuster">{@render icon('zoomFit')}</button>
		<button class="ft" aria-label="Zoom arrière">{@render icon('zoomOut')}</button>
		<button class="ft" aria-label="Zoom avant">{@render icon('zoomIn')}</button>
		<button class="ft" aria-label="Plus">{@render icon('dots')}</button>
	</footer>
{/snippet}

{#snippet badge(x: number, y: number, label: string, color: string, size: number, bold: boolean)}
	<rect x={x - 1} y={y - size / 2 - 1} width={size === 7 ? 28 : 37} height={size + 2} fill="#9c9c9c" stroke="#858585" stroke-width=".5" />
	<text class="t{size}" class:bold {x} y={y + size * 0.36} fill={color}>{label}</text>
{/snippet}

{#snippet perf(p: Perf, w: number, h: number, id: string)}
	{@const ky = h / p.height}
	{@const kx = w / 270}
	{@const X = (i: number) => (4 + i * p.step) * kx}
	{@const Y = (v: number) => (p.zero - v * p.unit) * ky}
	<svg class="plot" width={w} height={h}>
		<defs>
			<linearGradient id="{id}-g" x1="0" y1="0" x2="0" y2="1"><stop offset="0" stop-color="#abe8ce" /><stop offset="1" stop-color="#9cd8bb" /></linearGradient>
			<linearGradient id="{id}-r" x1="0" y1="0" x2="0" y2="1"><stop offset="0" stop-color="#c9bac6" /><stop offset="1" stop-color="#aaa0aa" /></linearGradient>
		</defs>
		<rect width={239 * kx} height={Math.max(0, Y(10))} fill="url(#{id}-g)" />
		<rect y={Math.max(0, Y(10))} width={239 * kx} height={Y(-10) - Math.max(0, Y(10))} fill={id === 'm' ? '#b6d8e8' : '#c4e8f5'} />
		<rect y={Y(-10)} width={239 * kx} height={p.plot * ky - Y(-10)} fill="url(#{id}-r)" />
		{#each p.ticks as t}
			<path d="M0 {Y(t)}H{241 * kx}" stroke="#000" opacity=".1" />
			<text class="t7" class:bold={p.bold.includes(t)} x={242 * kx} y={Math.max(7, Y(t) + 3)}>{t}</text>
		{/each}
		{#each [0, ...p.xs] as t}
			<path d="M{X(t)} 0V{p.plot * ky}" stroke="#000" opacity=".1" />
		{/each}
		<path d="M0 {Y(0)}H{239 * kx}" stroke="#4668d8" />
		<path d="M0 {Math.max(0.5, Y(10))}H{239 * kx}" stroke="#39c95b" stroke-dasharray="2 2" />
		<path d="M0 {Y(-10)}H{239 * kx}" stroke="#dd6a74" stroke-dasharray="2 2" />
		{#each p.steps as s}
			<path d="M{X(s.i - 1)} {Y(s.a)}L{X(s.i)} {Y(s.b)}" stroke={s.up ? '#32a048' : '#c84a48'} />
		{/each}
		{#each p.steps.filter((s) => s.mark) as s}
			<circle cx={X(s.i)} cy={Y(s.b)} r="1.5" fill="#eef" stroke={s.up ? '#28a545' : '#d23c46'} stroke-width=".8" />
		{/each}
		<text class="t7" x="1" y="7">Horizontal: <tspan class="bold">Transactions</tspan>, Vertical: <tspan class="bold">Devise (€)</tspan>, Transactions: <tspan class="bold" fill="#0a9a1e">{p.wins}</tspan> / <tspan class="bold">0</tspan> / <tspan class="bold" fill="#d8101c">{p.losses}</tspan></text>
		<text class="t7" x="1" y={p.plot * ky - 2} fill="#e01824">© IT-Finance.com</text>
		{#each p.xs as t}
			<text class="t7 mid" class:bold={t === 0} x={X(t)} y={p.plot * ky + 8}>{t}</text>
		{/each}
		<rect x={X(p.now) - (p.now > 9 ? 4 : 2)} y={p.plot * ky + 1} width={p.now > 9 ? 9 : 6} height="9" fill="#f4f400" />
		<text class="t7 mid" x={X(p.now) + 1} y={p.plot * ky + 8}>{p.now}</text>
	</svg>
{/snippet}

{#snippet perfHead()}
	<header class="head">
		<span class="cell lead">{@render icon('candle')}</span>
		<span class="cell wide">Performance</span>
		<button class="cell menu bold">Tous les instruments</button>
		<button class="hi" aria-label="Réglages">{@render icon('wrench')}</button>
		<button class="hi" aria-label="Alerte">{@render icon('warn')}</button>
		<span class="grow"></span>
		<button class="hi" aria-label="Partager">{@render icon('share')}</button>
		{@render winButtons()}
	</header>
{/snippet}

<div class="desk">
	<nav class="browser">
		<a href="#historique"><u>H</u>istorique</a>
		<a href="#marque-pages"><u>M</u>arque-pages</a>
		<a href="#outils"><u>O</u>utils</a>
		<a href="#aide">Aid<u>e</u></a>
	</nav>

	<div class="bars">
		<div class="menubar">
			<span class="logo">{@render icon('logo')}<span><b>ProRealTime</b><em>Complete</em></span></span>
			<button>Fichier</button>
			<button>Affichage</button>
			<button>Trading</button>
			<button>Objets</button>
			<button>Réglages</button>
			<button>Aide</button>
			{@render icon('chain')}
			<span class="find"><input aria-label="Recherche" placeholder="Recherche ..." />{@render icon('searchR')}</span>
			<span class="grow"></span>
			<span class="tab on">{@render icon('pencils')}</span>
			<span class="tab">{@render icon('flag')}</span>
			<button class="tab">dax 2 test</button>
			<button class="tab">{@render icon('battery')}Push+</button>
			<button class="tab">{@render icon('lamp')}DealThru</button>
			<span class="tab small">{@render icon('wrench')}{@render icon('pin')}{@render icon('min')}{@render icon('close')}</span>
		</div>
		<div class="toolbar">
			<div class="tools">
				{#each drawTools as t, i}
					<button class:on={i === 0} aria-label={t}>{@render icon(t)}</button>
				{/each}
			</div>
		</div>
	</div>

	<section class="panel">
		{@render chartHead('15 minutes', '1 k unités', 'Allemagne 40 Cash')}
		<div class="stats three">{@render stats()}</div>
		<div class="ticketrow">{@render ticket('l')}</div>
		<div class="chart" bind:clientWidth={lw} bind:clientHeight={lh}>
			<svg class="plot" width={lw} height={lh}>
				<defs>
					<linearGradient id="grey" x1="0" y1="0" x2="0" y2="1"><stop offset="0" stop-color="#cbcbcb" /><stop offset=".6" stop-color="#a9a9a9" /><stop offset="1" stop-color="#989898" /></linearGradient>
					<linearGradient id="lav" x1="0" y1="0" x2="0" y2="1"><stop offset="0" stop-color="#cdcde5" /><stop offset="1" stop-color="#adadc5" /></linearGradient>
				</defs>
				<rect width={L.x(315)} height={L.y(966)} fill="url(#grey)" />
				<path d={L.path([[1, 98], [270, 98], [284, 127], [296, 131], [296, 966], [1, 966]]) + 'Z'} fill="url(#lav)" />
				<path d={L.path([...lUpper, ...[...lLower].reverse()]) + 'Z'} fill="#d0b090" opacity=".55" />
				{#each lGrid as g}
					<path d="M0 {L.y(g.y)}H{L.x(317)}" stroke="#000" stroke-width={g.bold ? 2 : 1} opacity={g.bold ? 0.25 : 0.1} />
				{/each}
				{#each lAreas[0] as a}
					<path d={L.path(a) + 'Z'} fill="#5fdc50" opacity=".55" />
				{/each}
				{#each lAreas[1] as a}
					<path d={L.path(a) + 'Z'} fill="#ff8a90" opacity=".25" />
				{/each}
				<path d={L.path(lUpper)} class="ln" stroke="#9a40e0" />
				<path d={L.path(lLower)} class="ln" stroke="#9a40e0" />
				{#each lCandles as c, i}
					<path d="M{L.x(lx(i))} {L.y(c[2])}V{L.y(c[3])}" stroke={c[4] ? '#222' : '#d22'} opacity=".7" />
					<rect x={L.x(lx(i)) - 1.5} y={L.y(c[0])} width="3" height={Math.max(1, L.y(c[1]) - L.y(c[0]))} fill={c[4] ? '#0c3434' : '#f31414'} stroke={c[4] ? '#041c1c' : '#c00'} stroke-width=".4" />
				{/each}
				<path d={L.path(lFast)} class="ln" stroke="red" stroke-width="1.5" />
				<path d={L.path(slice(lFast, 50, 60))} class="ln" stroke="#0a9a14" stroke-width="1.5" />
				<path d={L.path(slice(lFast, 106, 168))} class="ln" stroke="#0a9a14" stroke-width="1.5" />
				<path d={L.path(slice(lFast, 247, 268))} class="ln" stroke="#0a9a14" stroke-width="1.5" />
				<path d={L.path(lSlow)} class="ln" stroke="#0a9a14" stroke-width="2.5" />
				{#each lLines as [y, color, width, dash, label, size]}
					<path d="M0 {L.y(y)}H{L.x(299)}" stroke={color} stroke-width={width} stroke-dasharray={dash} />
					<text class="t{size} end" x={L.x(297)} y={L.y(y) - 2} fill={color}>{label}</text>
				{/each}
				<path d="M0 {L.y(578.5)}H{L.x(299)}" stroke="yellow" stroke-width="1.5" stroke-dasharray="9 1" />
				<path d="M0 {L.y(385)}H{L.x(318)}" stroke="yellow" stroke-width="2" stroke-dasharray="4 3" />
				<path d="M0 {L.y(839.5)}H{L.x(315)}" stroke="blue" stroke-width="2" />
				<text class="t9 end" x={L.x(313)} y={L.y(837)} fill="blue">mS1 M</text>
				<text class="t9" x={L.x(3)} y={L.y(143)} fill="red">Haut (S, Pré) 15 299</text>
				<text class="t9" x={L.x(3)} y={L.y(252)} fill="yellow">Haut (J, Pré) 15 272</text>
				<text class="t9" x={L.x(121)} y={L.y(252)}>Haut J 15 272</text>
				<text class="t9" x={L.x(3)} y={L.y(295)} fill="yellow">Haut (J, Pré) 15 262</text>
				<text class="t9" x={L.x(3)} y={L.y(340)} fill="yellow">Clo (S, Pré) 15 251</text>
				<text class="t16" x={L.x(3)} y={L.y(382)} fill="yellow">Clo (M, Pré) 15 240</text>
				<text class="t9" x={L.x(3)} y={L.y(440)} fill="yellow">Clo (J, Pré) 15 226</text>
				<text class="t9 strong" x={L.x(3)} y={L.y(576)} fill="yellow">Clo (S, Pré) 15 193</text>
				<text class="t7 end" x={L.x(297)} y={L.y(577)} fill="yellow">Clo J</text>
				<text class="t9" x={L.x(3)} y={L.y(628)} fill="yellow">Bas (J, Pré) 15 180</text>
				<text class="t9" x={L.x(123)} y={L.y(628)}>Bas J 15 180</text>
				<text class="t6" x={L.x(2)} y={L.y(965)} fill="#e01824">© IT-Finance.com <tspan font-style="italic">Données indicatives</tspan></text>
				<rect x={L.x(295)} y={L.y(557)} width="20" height={L.y(588) - L.y(557)} fill="#40c060" opacity=".25" />
				<rect x={L.x(315)} width={lw} height={lh} fill="#fff" />
				<path d="M{L.x(315)} 0V{L.y(966)}M0 {L.y(966)}H{L.x(315)}" stroke="#9db4be" />
				<path d="M{L.x(295)} {L.y(568.5)}H{L.x(317)}" stroke="#20e020" />
				<path d="M{L.x(295)} {L.y(589.5)}H{L.x(317)}" stroke="#e02020" />
				{#each lGrid.filter((g) => !g.hide) as g, i}
					<text class="t7" class:bold={g.bold} x={L.x(318)} y={(i ? L.y(g.y) : L.y(102)) + 2}>{g.label}</text>
				{/each}
				{@render badge(L.x(319), L.y(342.5), '15 250,6', '#ffff00', 8, true)}
				{@render badge(L.x(319), L.y(385), '15 240,2', '#ffff00', 9, true)}
				{@render badge(L.x(319), L.y(568.5), '15 195,5', '#20e020', 7, false)}
				{@render badge(L.x(319), L.y(589.5), '15 190,5', '#e01010', 7, false)}
				{@render badge(L.x(319), L.y(579), '15 193,0', '#ffff00', 9, true)}
				{@render badge(L.x(319), L.y(839.5), '15 129,5', '#0000e8', 9, true)}
				{#each lTimes as t, i}
					<text class="t7 mid" x={L.x(25 + i * 34.25)} y={L.y(974)}>{t}</text>
				{/each}
				<text class="t7 mid" x={L.x(150)} y={L.y(981)}>ven. 8 oct. 2021</text>
				<path d="M{L.x(299)} {L.y(976)}V{lh}" stroke="#9db4be" />
			</svg>
		</div>
		{@render foot()}
	</section>

	<section class="panel main">
		{@render chartHead('15 secondes', '10 k unités', 'Allemagne 40 Cash (1€)')}
		<div class="inforow">
			<div class="stats six">{@render stats()}</div>
			{@render ticket('m')}
		</div>
		<div class="chart" bind:clientWidth={mw} bind:clientHeight={mh}>
			<svg class="plot" width={mw} height={mh}>
				<rect width={M.x(1338)} height={M.y(966)} fill="url(#grey)" />
				<path d={M.path([...mUpper, ...[...mLower].reverse()]) + 'Z'} fill="#c8c8fa" opacity=".45" />
				{#each mGrid as g}
					<path d="M0 {M.y(g.y)}H{M.x(1340)}" stroke="#000" stroke-width={g.bold ? 2 : 1} opacity={g.bold ? 0.25 : 0.1} />
				{/each}
				{#each mTrend[0] as a}
					<path d={M.path(a) + 'Z'} fill="#8cc8a4" opacity=".5" />
				{/each}
				{#each mTrend[1] as a}
					<path d={M.path(a) + 'Z'} fill="#d06878" opacity=".27" />
				{/each}
				{#each mBetween[0] as a}
					<path d={M.path(a) + 'Z'} fill="#20a848" opacity=".8" />
				{/each}
				{#each mBetween[1] as a}
					<path d={M.path(a) + 'Z'} fill="#ff6064" opacity=".75" />
				{/each}
				<path d="M0 {M.y(205)}H{M.x(1338)}M0 {M.y(488)}H{M.x(1338)}" stroke="#f2f260" stroke-dasharray="2 2" opacity=".8" />
				{#each spikes as [x, a, b]}
					<path d="M{M.x(x)} {M.y(a)}V{M.y(b)}" stroke={at(mPrice, x + 1) < at(mPrice, x - 2) ? '#222' : '#c01818'} stroke-width="1.5" opacity=".55" />
				{/each}
				<path d={barPaths[2]} stroke="#d01818" opacity=".6" />
				<path d={barPaths[3]} stroke="#222" opacity=".6" />
				<path d={barPaths[0]} stroke="#ea0c10" stroke-width="1.7" />
				<path d={barPaths[1]} stroke="#08201c" stroke-width="1.7" />
				<path d={M.path(mFast)} class="ln" stroke="#f01818" />
				{#each mBetween[0] as a}
					<path d={M.path(a.slice(a.length / 2))} class="ln" stroke="#0a9a38" />
				{/each}
				<path d={M.path(mUpper)} class="ln" stroke="#2424e8" />
				<path d={M.path(mLower)} class="ln" stroke="#2424e8" />
				<path d={M.path(mSlow)} class="ln" stroke="red" stroke-width="2" />
				<path d={M.path(slice(mSlow, 443, 548))} class="ln" stroke="#0a9a14" stroke-width="2" />
				<path d={M.path(slice(mSlow, 1132, 1165))} class="ln" stroke="#0a9a14" stroke-width="2" />
				<path d="M0 {M.y(346)}H{M.x(1338)}" stroke="red" stroke-width="1.5" />
				<path d="M0 {M.y(292)}H{M.x(1338)}" stroke="yellow" stroke-width="2" stroke-dasharray="3 3" />
				<path d="M0 {M.y(376)}H{M.x(1338)}" stroke="yellow" stroke-width="2" stroke-dasharray="4 3" />
				<path d="M0 {M.y(753.5)}H{M.x(1338)}" stroke="yellow" stroke-dasharray="10 4" />
				<path d="M0 {M.y(121)}H{M.x(1336)}M0 {M.y(820.5)}H{M.x(1336)}M0 {M.y(853.5)}H{M.x(1336)}" stroke="#111" stroke-width="1.5" stroke-dasharray="3 3" />
				<text class="t9" x={M.x(818)} y={M.y(118)}>Haut J 15 272</text>
				<text class="t9" x={M.x(820)} y={M.y(851)}>Bas J 15 180</text>
				<text class="t9" x={M.x(358)} y={M.y(203)} fill="yellow">Haut (J, Pré) 15 262</text>
				<text class="t9" x={M.x(358)} y={M.y(290)} fill="yellow">Clo (S, Pré) 15 251</text>
				<text class="t16" x={M.x(358)} y={M.y(372)} fill="yellow">Clo (M, Pré) 15 240</text>
				<text class="t9" x={M.x(358)} y={M.y(486)} fill="yellow">Clo (J, Pré) 15 226</text>
				<text class="t7 end" x={M.x(1335)} y={M.y(344)} fill="red">mR1 J</text>
				<text class="t7 end" x={M.x(1335)} y={M.y(752)} fill="yellow">Clo J</text>
				<text class="t7 end" x={M.x(1335)} y={M.y(818)}>Piv J</text>
				<text class="t6" x={M.x(357)} y={M.y(965)} fill="#e01824">© IT-Finance.com <tspan font-style="italic">Données indicatives</tspan></text>
				<rect x={M.x(1338)} width={mw} height={mh} fill="#fff" />
				<path d="M{M.x(1338)} 0V{M.y(966)}M0 {M.y(966)}H{M.x(1338)}" stroke="#9db4be" />
				{#each mGrid.filter((g) => !g.hide) as g}
					<path d="M{M.x(1338)} {M.y(g.y)}h2" stroke="#9db4be" />
					<text class="t7" class:bold={g.bold} x={M.x(1341)} y={M.y(g.y) + 2}>{g.label}</text>
				{/each}
				{@render badge(M.x(1341), M.y(292), '15 250,6', '#ffff00', 8, true)}
				{@render badge(M.x(1341), M.y(376), '15 240,2', '#ffff00', 8, true)}
				{@render badge(M.x(1341), M.y(734), '15 195,5', '#20e020', 7, false)}
				{@render badge(M.x(1341), M.y(754), '15 193,0', '#ffff00', 9, true)}
				{@render badge(M.x(1341), M.y(774), '15 190,5', '#e01010', 7, false)}
				{@render badge(M.x(1341), M.y(821), '15 184,6', '#111', 7, true)}
				{#each mTimes as t}
					<text class="t7 mid" x={M.x(t.x)} y={M.y(974)}>{t.label}</text>
				{/each}
				<text class="t7 mid" x={M.x(847)} y={M.y(981)}>ven. 8 oct. 2021</text>
				<text class="t9" x={M.x(1330)} y={M.y(978)} fill="#555">»</text>
			</svg>
		</div>
		{@render foot()}
	</section>

	<aside class="side">
		<section class="panel month">
			{@render perfHead()}
			<div class="filter">
				<span class="sel"><select aria-label="Trading"><option>Tout le trading</option></select></span>
				<span class="sel"><select aria-label="Trades"><option>Tous les trades</option></select></span>
				{@render icon('calendar')}
				<span>Mois en cours</span>
			</div>
			<div class="chart" bind:clientWidth={pw} bind:clientHeight={ph}>{@render perf(month, pw, ph, 'm')}</div>
		</section>

		<section class="panel week">
			{@render perfHead()}
			<div class="filter">
				<span class="sel"><select aria-label="Trading"><option>Tout le trading</option></select></span>
				<span class="sel"><select aria-label="Trades"><option>Tous les trades</option></select></span>
				{@render icon('calendar')}
				<dl><dt>Début :</dt><dd>8 oct. 2021 00:00</dd><dt>Fin :</dt><dd>10 oct. 2021 14:01</dd></dl>
			</div>
			<div class="chart" bind:clientHeight={qh}>{@render perf(week, pw, qh, 'w')}</div>
		</section>

		<section class="panel lists">
			<header class="head">
				<span class="cell lead">{@render icon('candle')}</span>
				<span class="cell wide">Listes</span>
				<button class="cell menu bold">My List (4)</button>
				<button class="hi" aria-label="Ajouter">{@render icon('listAdd')}</button>
				<button class="hi" aria-label="Réglages">{@render icon('wrench')}</button>
				<span class="grow"></span>
				<button class="hi" aria-label="Descendre">{@render icon('sortDown')}</button>
				<button class="hi" aria-label="Monter">{@render icon('sortUp')}</button>
				<button class="hi" aria-label="Vue">{@render icon('cards')}</button>
				<button class="hi" aria-label="Partager">{@render icon('share')}</button>
				{@render winButtons()}
			</header>
			<div class="sortbar">
				<label>Taille <span class="sel"><select><option>Fixe</option></select></span></label>
				<span class="duo"><label>Trier par <span class="sel"><select><option>%Var</option></select></span></label><button class="flip">↑↓</button></span>
				<label>Couleur <span class="sel"><select><option>%Var</option></select></span></label>
				<span class="duo">{@render icon('zoomOut')}{@render icon('zoomIn')}</span>
			</div>
			{#each instruments as it}
				<div class="tile {it.tone}">
					<button class:active={it.active}><b>{it.name}</b>{it.change}</button>
				</div>
			{/each}
		</section>

		<section class="panel">
			<header class="head pinned">
				<span class="cell lead">{@render icon('candle')}</span>
				<span class="cell link">{@render icon('chain')}</span>
				<button class="cell menu bold">DAX</button>
				{@render quote('Allemagne 40 Cash (')}
				{@render icon('pin')}
				{@render winButtons()}
			</header>
			<div class="ticketgrid">
				<dl class="pos">
					<dt>Gain la...</dt><dd><b>0,00 pts</b></dd>
					<dt>Gain ...</dt><dd><b>0,00 pts</b></dd>
					<dt>Trades ...</dt><dd><b class="gain">0</b> / <b>0</b> / <b class="neg">0</b></dd>
					<dt>Or...</dt><dd><b>0</b> {@render icon('order')} &nbsp;/ <b>0</b><b class="blue">(</b></dd>
					<dt>Posi...</dt><dd><b>0</b> {@render icon('posx')} &nbsp;/ <b>0</b><b class="blue">(</b></dd>
					<dt>Durée ...</dt><dd><b>-</b></dd>
				</dl>
				<div class="size">
					<label for="big-qty">Qté</label>
					<input id="big-qty" class="big" value="0.5" />
					<div class="guards">
						<span><label class="off"><input type="checkbox" checked disabled /> Sg</label><input aria-label="Stop" class="n3" value="304" />pts</span>
						<span><label><input type="checkbox" checked /> Limite</label><input aria-label="Limite" class="n2" value="20" />pts</span>
					</div>
					<div class="spins">
						<span><input aria-label="Ticks stop" value="1" /><i></i></span>
						<span><input aria-label="Ticks limite" value="1" /><i></i></span>
					</div>
				</div>
				<div class="void"></div>
				<button class="side-btn sellbox"><span>Vendre 0,5</span><strong>15 190,5</strong><small>+ Sg 10 / Limite 20</small></button>
				<div class="centre">
					<div class="ticks"><button disabled>Stop à 1 ticks</button><button disabled>Limite à 1 ticks</button></div>
					<button class="nopos" disabled>Pas de position</button>
				</div>
				<button class="side-btn buybox"><span>Acheter 0,5</span><strong>15 195,5</strong><small>+ Sg 10 / Limite 20</small></button>
			</div>
			<div class="actions">
				<button class="hi" aria-label="Grille">{@render icon('grid')}</button>
				<button disabled>Inverser position</button>
				<button disabled>Pas d'ordres en attente</button>
				<button class="hi" aria-label="Graphique">{@render icon('check')}</button>
				<button class="hi" aria-label="Carnet">{@render icon('book2')}</button>
			</div>
			<table>
				<thead>
					<tr>
						<th class="tl">{@render icon('expand')} {@render icon('wrench')}</th>
						<th class="q">Qté</th>
						<th class="left">| &nbsp; ▼ Prix de revient unitaire &nbsp; |</th>
					</tr>
				</thead>
			</table>
			<div class="empty"></div>
			<div class="depth">
				<span>Offre <b class="blue">➔</b><b>0</b></span>
				<span><b>0</b><b class="blue">⬅</b> Demande</span>
				<span>Spread: 5,0</span>
			</div>
		</section>
	</aside>
</div>

<style>
	:global(body) {
		background: #5d7884;
	}
	.desk {
		display: grid;
		grid-template-columns: 355fr 1023fr 271fr;
		grid-template-rows: 35px minmax(0, 1fr);
		height: 100vh;
		overflow: hidden;
		font: 7px/9px 'Liberation Sans', Arial, sans-serif;
		color: #1a1a1a;
	}
	button,
	input,
	select {
		font: inherit;
		color: inherit;
		margin: 0;
		padding: 0;
		border: 0;
		background: none;
		border-radius: 0;
		box-sizing: border-box;
		min-width: 0;
		white-space: nowrap;
	}
	.icon {
		width: 10px;
		height: 10px;
		flex: none;
		vertical-align: middle;
		overflow: visible;
	}
	.bold,
	b {
		font-weight: bold;
	}
	.neg {
		color: #d8101c;
	}
	.gain {
		color: #0a9a1e;
	}
	.blue {
		color: #1b74e0;
	}
	.grow {
		flex: 1;
	}
	.off {
		color: #8d979c;
	}

	.browser {
		display: flex;
		gap: 11px;
		padding: 3px 7px;
		background: #1b1a22;
		font: 9px/13px 'Open Sans', 'Noto Sans', sans-serif;
	}
	.browser a {
		color: #f2f2f2;
		text-decoration: none;
	}
	.bars {
		grid-column: 2 / 4;
		display: flex;
		flex-direction: column;
		border-left: 1px solid #1b1a22;
	}
	.menubar {
		display: flex;
		align-items: center;
		height: 17px;
		background: linear-gradient(#a9cdf6, #8fb8e6);
		color: #14202c;
	}
	.menubar > button {
		padding: 0 3px;
	}
	.logo {
		display: flex;
		align-items: center;
		gap: 3px;
		width: 56px;
		height: 15px;
		background: #2a2d33;
	}
	.logo b {
		display: block;
		color: #8fe02a;
		line-height: 7px;
	}
	.logo em {
		display: block;
		color: #ddd;
		font-style: normal;
		line-height: 6px;
	}
	.find {
		display: flex;
		align-items: center;
		width: 88px;
		height: 15px;
		background: #fff;
	}
	.find input {
		flex: 1;
		padding-left: 2px;
	}
	.find input::placeholder {
		color: #aaa;
		font-style: italic;
	}
	.menubar .tab {
		display: flex;
		align-items: center;
		gap: 1px;
		height: 15px;
		padding: 0 2px;
		border-left: 1px solid #7fa5cf;
	}
	.menubar .tab.on {
		background: #8b9aa8;
	}
	.menubar .small {
		gap: 2px;
	}
	.menubar .small .icon {
		width: 7px;
		height: 7px;
	}
	.toolbar {
		flex: 1;
		background: #9cbac7;
		border-top: 1px solid #6f919f;
		border-bottom: 1px solid #546f7b;
	}
	.tools {
		display: flex;
		width: 394px;
		height: 100%;
	}
	.tools button {
		flex: 1;
		display: grid;
		place-items: center;
	}
	.tools .icon {
		width: 13px;
		height: 13px;
	}
	.tools .on {
		background: #87a5b1;
	}

	.panel {
		display: flex;
		flex-direction: column;
		min-width: 0;
		min-height: 0;
		background: #fff;
		border-left: 1px solid #5d7884;
		border-bottom: 1px solid #5d7884;
		overflow: hidden;
	}
	.head {
		display: flex;
		align-items: center;
		flex: none;
		height: 16px;
		background: linear-gradient(#b7d7e3, #96b8c5);
		white-space: nowrap;
	}
	.head .cell {
		display: flex;
		align-items: center;
		height: 100%;
		padding: 0 2px;
		border-right: 1px solid #86a6b3;
	}
	.head .lead {
		padding: 0 1px;
		border: 0;
	}
	.head .link {
		padding: 0 1px;
	}
	.head .wide {
		padding-left: 4px;
		padding-right: 1px;
	}
	.menu::after {
		content: '';
		margin-left: 2px;
		border: 2px solid transparent;
		border-top-color: currentColor;
		border-bottom: 0;
	}
	.quote {
		flex: 1;
		min-width: 0;
		overflow: hidden;
		padding-left: 1px;
	}
	.quote .icon {
		width: 7px;
		height: 8px;
		margin-right: 1px;
	}
	.bullet {
		display: inline-block;
		width: 4px;
		height: 4px;
		border-radius: 50%;
		background: #8b979c;
	}
	.pinned > .icon {
		width: 7px;
		height: 7px;
	}
	.refresh {
		width: 14px;
		height: 100%;
		background: #fff;
	}
	.win {
		display: flex;
		gap: 2px;
		padding: 0 3px;
	}
	.win .icon {
		width: 7px;
		height: 7px;
	}
	.hi {
		padding: 0 2px;
	}

	.stats {
		display: grid;
		align-items: center;
		justify-items: center;
		white-space: nowrap;
	}
	.stats .icon {
		width: 7px;
		height: 7px;
	}
	.three {
		grid-template-columns: repeat(3, 1fr);
		height: 20px;
		padding: 0 10px 0 20px;
		border-bottom: 1px solid #b9cdd5;
	}
	.six {
		flex: 1;
		grid-template-columns: repeat(6, 1fr);
		padding: 0 16px 0 26px;
	}
	.inforow {
		display: flex;
		flex: none;
		height: 26px;
		border-bottom: 1px solid #b9cdd5;
	}
	.ticketrow {
		display: flex;
		flex: none;
		justify-content: center;
		height: 26px;
	}
	.ticket {
		display: flex;
		gap: 3px;
		width: 298px;
		padding: 1px 0;
		box-sizing: border-box;
		border-left: 1px solid #c5d5dc;
		white-space: nowrap;
	}
	.stack {
		display: flex;
		flex-direction: column;
		align-items: stretch;
		justify-content: space-between;
		text-align: center;
	}
	.stack > span,
	.stack > label {
		line-height: 7px;
	}
	.mini {
		width: 11px;
	}
	.tool,
	.order button {
		display: grid;
		place-items: center;
		height: 11px;
		border: 1px solid #b8c4c9;
		background: #f4f4f4;
	}
	.tool .icon {
		width: 9px;
		height: 9px;
	}
	.qty {
		width: 33px;
	}
	.qty input {
		height: 13px;
		margin-bottom: 3px;
		border: 1px solid #9fb0b8;
		text-align: right;
	}
	.order {
		width: 18px;
		align-items: center;
	}
	.order button {
		width: 15px;
		height: 16px;
	}
	.order .icon {
		width: 12px;
		height: 12px;
	}
	.lmt {
		width: 38px;
	}
	.lmt button {
		height: 10px;
		color: #fff;
	}
	.deal {
		width: 39px;
	}
	.deal button {
		height: 16px;
		color: #fff;
		font-size: 13px;
		line-height: 16px;
	}
	.deal small {
		font-size: 7px;
	}
	.deal sup {
		font-size: 6px;
		line-height: 6px;
	}
	.sell button {
		background: #e0474d;
	}
	.buy button {
		background: #18b327;
	}
	.guard {
		width: 41px;
		text-align: left;
	}
	.guard div {
		display: flex;
		align-items: center;
		gap: 1px;
		height: 11px;
	}
	.guard label {
		flex: 1;
	}
	input[type='checkbox'] {
		appearance: none;
		width: 7px;
		height: 7px;
		border: 1px solid #99a;
		background: #fff;
		vertical-align: middle;
	}
	input[type='checkbox']:checked::after {
		content: '';
		display: block;
		width: 1px;
		height: 3px;
		margin-left: 2px;
		border: solid #111;
		border-width: 0 1px 1px 0;
		transform: rotate(40deg);
	}
	input[type='checkbox']:disabled::after {
		border-color: #999;
	}
	.guard .pts {
		width: 10px;
		height: 11px;
		border: 1px solid #b8c4c9;
		text-align: center;
	}

	.chart {
		flex: 1;
		min-height: 0;
		overflow: hidden;
	}
	.plot {
		display: block;
	}
	.ln {
		fill: none;
		stroke-linejoin: round;
	}
	.t6 {
		font-size: 6px;
	}
	.t7 {
		font-size: 7px;
	}
	.t8 {
		font-size: 8px;
	}
	.t9 {
		font-size: 9px;
	}
	.t16 {
		font-size: 16px;
	}
	.strong {
		stroke: yellow;
		stroke-width: 0.4px;
	}
	.mid {
		text-anchor: middle;
	}
	.end {
		text-anchor: end;
	}

	.foot {
		display: flex;
		align-items: center;
		flex: none;
		height: 16px;
		background: linear-gradient(#a9c9d6, #93b4c1);
	}
	.foot .icon {
		width: 12px;
		height: 12px;
	}
	.ft {
		width: 15px;
		height: 100%;
		flex: none;
	}
	.drop {
		display: grid;
		place-items: center;
		width: 10px;
		height: 100%;
	}
	.drop::after {
		content: '';
		border: 2px solid transparent;
		border-top-color: #111;
		border-bottom: 0;
	}
	.white {
		background: #fff;
	}
	.partager {
		width: 41px;
		height: 100%;
		margin-right: 2px;
		background: #2f8fd8;
		color: #fff;
	}
	.foot .partager .icon {
		width: 9px;
		height: 9px;
	}
	.chev {
		width: 10px;
		font-size: 9px;
		text-align: center;
	}
	.arr {
		width: 9px;
		height: 10px;
		background: #c2dce5;
	}
	.track {
		flex: 1;
		height: 12px;
		background: #9dbecb;
		border: 1px solid #86a6b3;
		box-sizing: border-box;
	}
	.track i {
		display: block;
		width: 5%;
		height: 100%;
		margin-left: 67%;
		background: #b9dbe8;
	}
	.panel:first-of-type .track i {
		width: 97%;
		margin-left: 0;
		background: #a5c6d3;
	}

	.side {
		display: grid;
		grid-template-rows: 270fr 275fr 161fr 259fr;
		min-height: 0;
		min-width: 0;
	}
	.filter {
		display: flex;
		align-items: center;
		gap: 4px;
		flex: none;
		height: 20px;
		padding-left: 4px;
		white-space: nowrap;
	}
	.week .filter {
		height: 21px;
	}
	.filter .icon {
		width: 13px;
		height: 13px;
	}
	.sel {
		position: relative;
		display: inline-block;
	}
	.sel select {
		appearance: none;
		height: 10px;
		padding: 0 8px 0 2px;
		background: #f7f7f7;
		border: 1px solid #a9b6bc;
		line-height: 8px;
	}
	.sel::after {
		content: '';
		position: absolute;
		right: 3px;
		top: 4px;
		border: 2px solid transparent;
		border-top-color: #111;
		border-bottom: 0;
	}
	.filter dl {
		display: grid;
		grid-template-columns: 22px auto;
		margin: 0;
		line-height: 8px;
	}
	dd {
		margin: 0;
	}

	.sortbar {
		display: flex;
		align-items: center;
		justify-content: space-between;
		flex: none;
		height: 16px;
		padding: 0 4px 0 20px;
		background: #a3c2ce;
		white-space: nowrap;
	}
	.duo {
		display: flex;
		gap: 4px;
	}
	.duo .icon {
		width: 12px;
		height: 12px;
	}
	.flip {
		height: 10px;
		padding: 0 1px;
		background: #fff;
		color: #111;
		font-size: 7px;
		font-weight: bold;
	}
	.tile {
		flex: 1;
		display: grid;
		place-items: center;
		padding-top: 13px;
		border-top: 1px solid #8f8084;
	}
	.tile button {
		min-width: 80px;
		height: 18px;
		line-height: 8px;
	}
	.tile b {
		display: block;
	}
	.tile .active {
		background: #ffc56a;
	}
	.dim {
		background: #6e4b4b;
	}
	.soft {
		background: #924949;
	}
	.hot {
		background: #dc4a4a;
	}

	.ticketgrid {
		display: grid;
		grid-template-columns: 70fr 129fr 71fr;
		grid-template-rows: 91fr 77fr;
		gap: 1px;
		flex: 168;
		min-height: 0;
		background: #8fa9b4;
	}
	.ticketgrid > * {
		min-width: 0;
		background: #cddde4;
	}
	.pos {
		display: grid;
		grid-template-columns: 32px 1fr;
		align-content: space-evenly;
		margin: 0;
		padding: 8px 0 8px 4px;
		white-space: nowrap;
		overflow: hidden;
	}
	.pos .icon {
		width: 7px;
		height: 7px;
	}
	.size {
		display: flex;
		flex-direction: column;
		align-items: center;
		padding-top: 8px;
	}
	.size input:not([type='checkbox']) {
		background: #fff;
		text-align: right;
	}
	.size .big {
		width: 49px;
		height: 20px;
		border: 1px solid #a5b7be;
		font-size: 14px;
	}
	.guards {
		display: flex;
		gap: 11px;
		width: 118px;
		margin-top: 6px;
		padding-bottom: 12px;
		justify-content: center;
		border-bottom: 1px solid #8fa9b4;
	}
	.guards > span {
		display: flex;
		align-items: center;
		gap: 3px;
	}
	.n3,
	.n2 {
		width: 14px;
		height: 11px;
	}
	.n2 {
		width: 10px;
	}
	.spins {
		display: flex;
		gap: 34px;
		margin-top: 5px;
	}
	.spins span {
		display: flex;
		height: 11px;
		border: 1px solid #8fb0bc;
	}
	.spins input {
		width: 20px;
	}
	.spins i {
		display: flex;
		flex-direction: column;
		align-items: center;
		justify-content: space-between;
		width: 9px;
		padding: 2px 0;
		box-sizing: border-box;
		background: linear-gradient(#b8d6e2 5px, #7ea0ae 5px, #7ea0ae 6px, #b8d6e2 6px);
	}
	.spins i::before,
	.spins i::after {
		content: '';
		border: 2px solid transparent;
		border-top: 0;
		border-bottom-color: #233;
	}
	.spins i::after {
		border-top: 2px solid #233;
		border-bottom: 0;
	}
	.side-btn {
		display: flex;
		flex-direction: column;
		align-items: center;
		justify-content: space-between;
		padding: 3px 0 2px;
		overflow: hidden;
		color: #111;
	}
	.side-btn span {
		font-size: 14px;
		line-height: 16px;
	}
	.side-btn strong {
		font-size: 18px;
		line-height: 20px;
		font-weight: normal;
	}
	.side-btn small {
		align-self: flex-end;
		padding-right: 3px;
		font-size: 7px;
	}
	.ticketgrid .sellbox {
		background: #ecbcbd;
	}
	.ticketgrid .buybox {
		background: #aad1a8;
	}
	.centre {
		display: flex;
		flex-direction: column;
		color: #8b979c;
	}
	.ticks {
		display: flex;
		height: 16px;
		border-bottom: 1px solid #a9bcc5;
	}
	.ticks button {
		flex: 1;
	}
	.ticks button + button {
		border-left: 1px solid #a9bcc5;
	}
	.nopos {
		flex: 1;
	}
	.actions {
		display: flex;
		flex: none;
		height: 16px;
		border-top: 1px solid #8fa9b4;
		background: #cddde4;
	}
	.actions button:disabled {
		flex: 1;
		border-left: 1px solid #a9bcc5;
		color: #8b979c;
	}
	table {
		flex: none;
		width: 100%;
		table-layout: fixed;
		border-collapse: collapse;
		background: #46658e;
		color: #eef;
	}
	th {
		padding: 0;
		height: 10px;
		font-weight: normal;
		white-space: nowrap;
	}
	th .icon {
		width: 8px;
		height: 8px;
	}
	.tl {
		width: 20px;
	}
	.q {
		width: 76px;
	}
	.left {
		text-align: left;
	}
	.empty {
		flex: 37;
		background: #9cbac7;
	}
	.depth {
		display: grid;
		grid-template-columns: 59fr 112fr 68fr;
		align-items: center;
		flex: none;
		height: 11px;
		padding-left: 31px;
		background: #a9c7d3;
		border-top: 1px solid #c5dbe4;
		white-space: nowrap;
	}
</style>
